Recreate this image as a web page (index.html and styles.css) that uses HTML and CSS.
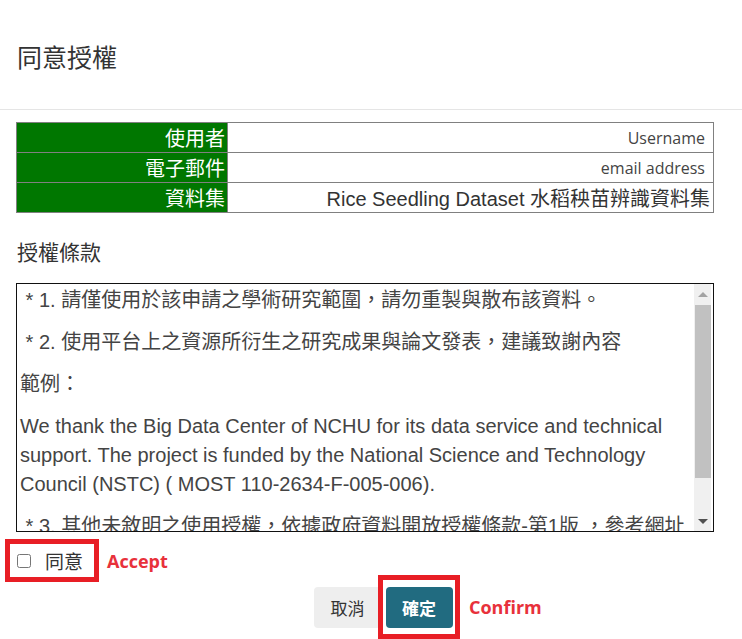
FILE: index.html
```html
<!DOCTYPE html>
<html lang="zh-Hant">
<head>
<meta charset="utf-8">
<title>同意授權</title>
<link rel="stylesheet" href="styles.css">
</head>
<body>
<div class="modal">
  <div class="modal-header">
    <h1 class="title">同意授權</h1>
  </div>
  <div class="modal-body">
    <table class="info">
      <tr><th>使用者</th><td class="val small">Username</td></tr>
      <tr><th>電子郵件</th><td class="val small">email address</td></tr>
      <tr><th>資料集</th><td class="val">Rice Seedling Dataset 水稻秧苗辨識資料集</td></tr>
    </table>
    <h2 class="terms-title">授權條款</h2>
    <div class="terms">
      <div class="terms-content">
        <p>&nbsp;* 1. 請僅使用於該申請之學術研究範圍，請勿重製與散布該資料。</p>
        <p>&nbsp;* 2. 使用平台上之資源所衍生之研究成果與論文發表，建議致謝內容</p>
        <p>範例：</p>
        <p>We thank the Big Data Center of NCHU for its data service and technical support. The project is funded by the National Science and Technology Council (NSTC) ( MOST 110-2634-F-005-006).</p>
        <p>&nbsp;* 3. 其他未敘明之使用授權，依據政府資料開放授權條款-第1版 ，參考網址</p>
      </div>
      <div class="scrollbar">
        <div class="arrow up"></div>
        <div class="track"><div class="thumb"></div></div>
        <div class="arrow down"></div>
      </div>
    </div>
    <div class="agree-row">
      <label class="agree-box hl"><input type="checkbox" class="chk"><span>同意</span></label>
      <span class="note">Accept</span>
    </div>
    <div class="actions">
      <button class="btn btn-cancel">取消</button>
      <span class="hl hl-btn"><button class="btn btn-ok">確定</button></span>
      <span class="note">Confirm</span>
    </div>
  </div>
</div>
</body>
</html>
```
FILE: styles.css
```css
html, body {
  margin: 0;
  padding: 0;
  background: #fff;
}
body {
  font-family: "Noto Sans CJK TC", "Noto Sans", sans-serif;
  color: #333;
  width: 742px;
  height: 639px;
  overflow: hidden;
}
.modal-header {
  height: 110px;
  border-bottom: 1px solid #e5e5e5;
  display: flex;
  align-items: center;
  padding-left: 17px;
  box-sizing: border-box;
}
.title {
  margin: 0;
  font-size: 25px;
  font-weight: 400;
  color: #333;
  line-height: 1;
  position: relative;
  top: 2px;
}
.modal-body {
  padding: 12px 28px 0 16px;
}
.info {
  width: 698px;
  border-collapse: collapse;
  border: 1px solid #808080;
}
.info th, .info td {
  border: 1px solid #808080;
  height: 29px;
  padding: 0 2px 0 4px;
  text-align: right;
}
.info th {
  width: 204px;
  background: #007700;
  color: #fff;
  font-weight: 400;
  font-size: 20px;
  font-family: "Noto Sans CJK TC", sans-serif;
  line-height: 1;
}
.info td.val {
  font-family: "Liberation Sans", "Noto Sans CJK TC", sans-serif;
  font-size: 20px;
  color: #333;
  padding-right: 3px;
}
.info td.val.small {
  font-family: "Open Sans", "Noto Sans CJK TC", sans-serif;
  font-size: 16px;
  color: #444;
  padding-right: 8px;
}
.terms-title {
  margin: 27px 0 0 1px;
  font-size: 21px;
  font-weight: 400;
  color: #333;
  line-height: 22px;
}
.terms {
  margin-top: 21px;
  width: 698px;
  height: 249px;
  border: 1px solid #111;
  box-sizing: border-box;
  display: flex;
  overflow: hidden;
}
.terms-content {
  flex: 1;
  padding: 0 4px 0 3px;
  font-family: "Liberation Sans", "Noto Sans CJK TC", sans-serif;
  font-size: 20px;
  line-height: 29px;
  color: #444;
  overflow: hidden;
}
.terms-content p {
  margin: 0 0 13px;
}
.terms-content p:first-child {
  margin-top: 2px;
}
.scrollbar {
  width: 17px;
  margin-right: 2px;
  background: #f0f0f0;
  display: flex;
  flex-direction: column;
}
.arrow {
  height: 21px;
  position: relative;
}
.arrow::after {
  content: "";
  position: absolute;
  left: 4px;
  top: 8px;
  border-left: 5px solid transparent;
  border-right: 5px solid transparent;
}
.arrow.up::after {
  border-bottom: 5px solid #a3a3a3;
}
.arrow.down::after {
  top: 9px;
  border-top: 5px solid #505050;
}
.track {
  flex: 1;
}
.thumb {
  height: 173px;
  background: #c1c1c1;
  margin-left: 1px;
}
.agree-row {
  margin-left: -11px;
  margin-top: 7px;
  display: flex;
  align-items: center;
}
.hl {
  border: 5px solid #e81e25;
  box-sizing: border-box;
}
.agree-box {
  width: 94px;
  height: 43px;
  display: flex;
  align-items: center;
  padding-left: 7px;
  font-size: 19px;
  color: #333;
}
.chk {
  width: 14px;
  height: 14px;
  margin: 0 14px 0 0;
}
.note {
  color: #e8313b;
  font-family: "Open Sans", sans-serif;
  font-weight: 700;
  font-size: 18px;
  margin-left: 8px;
}
.actions {
  display: flex;
  align-items: center;
  padding-left: 298px;
  margin-top: -7px;
}
.btn {
  font-family: "Noto Sans CJK TC", sans-serif;
  font-size: 17px;
  height: 41px;
  border: none;
  border-radius: 4px;
  padding: 0 15px;
  cursor: pointer;
}
.btn-cancel {
  background: #eeeeee;
  color: #333;
  width: 67px;
  margin-right: -3px;
}
.hl-btn {
  display: flex;
  align-items: center;
  justify-content: center;
  width: 82px;
  height: 64px;
}
.btn-ok {
  background: #216b80;
  color: #fff;
  font-weight: 700;
  width: 67px;
}
.actions .note {
  margin-left: 9px;
}
```
